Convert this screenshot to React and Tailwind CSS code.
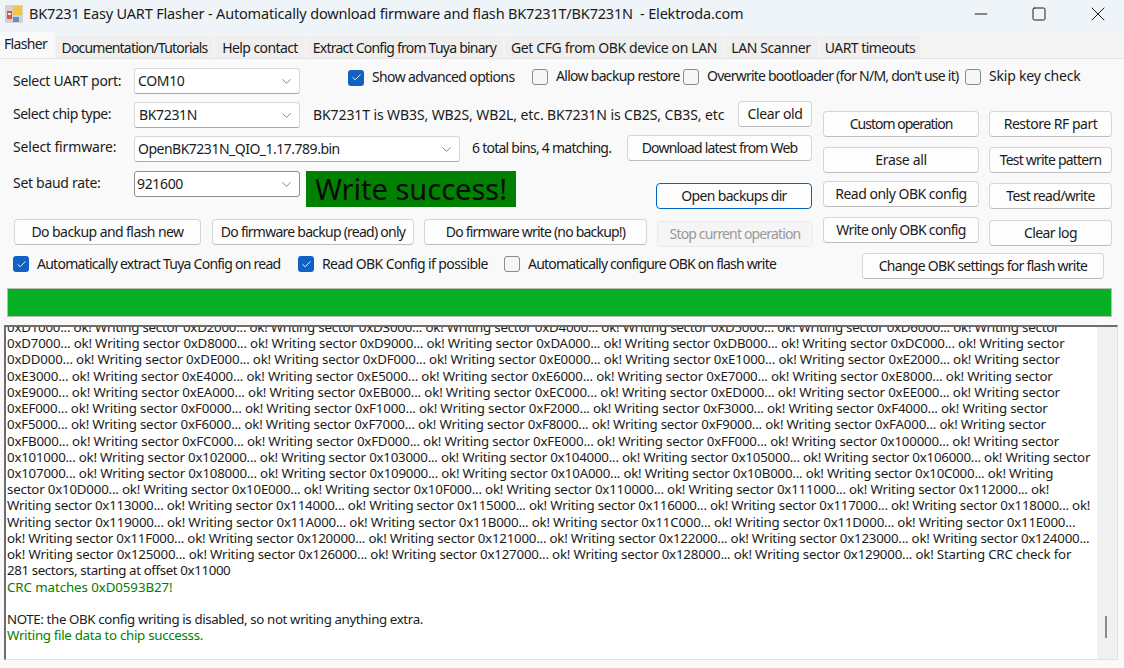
import { Check, ChevronDown, Minus, Square, X } from "lucide-react";

const tabs = [
  ["Documentation/Tutorials", "ml-[1px] w-[157px] tracking-[-0.8px]"],
  ["Help contact", "ml-[2px] w-[90px] tracking-[-0.6px]"],
  ["Extract Config from Tuya binary", "ml-[1px] w-[197px] tracking-[-0.77px]"],
  ["Get CFG from OBK device on LAN", "ml-[2px] w-[218px] tracking-[-0.38px]"],
  ["LAN Scanner", "ml-[1px] w-[94px] tracking-[-0.4px]"],
  ["UART timeouts", "ml-[2px] w-[100px] tracking-[-0.55px]"],
];

// wrapped by hand so the line ends land where the log wraps them
const logLines = [
  ["0xD1000... ok! Writing sector 0xD2000... ok! Writing sector 0xD3000... ok! Writing sector 0xD4000... ok! Writing sector 0xD5000... ok! Writing sector 0xD6000... ok! Writing sector", "tracking-[-0.215px]"],
  ["0xD7000... ok! Writing sector 0xD8000... ok! Writing sector 0xD9000... ok! Writing sector 0xDA000... ok! Writing sector 0xDB000... ok! Writing sector 0xDC000... ok! Writing sector", "tracking-[-0.2px]"],
  ["0xDD000... ok! Writing sector 0xDE000... ok! Writing sector 0xDF000... ok! Writing sector 0xE0000... ok! Writing sector 0xE1000... ok! Writing sector 0xE2000... ok! Writing sector", "tracking-[-0.18px]"],
  ["0xE3000... ok! Writing sector 0xE4000... ok! Writing sector 0xE5000... ok! Writing sector 0xE6000... ok! Writing sector 0xE7000... ok! Writing sector 0xE8000... ok! Writing sector", "tracking-[-0.175px]"],
  ["0xE9000... ok! Writing sector 0xEA000... ok! Writing sector 0xEB000... ok! Writing sector 0xEC000... ok! Writing sector 0xED000... ok! Writing sector 0xEE000... ok! Writing sector", "tracking-[-0.16px]"],
  ["0xEF000... ok! Writing sector 0xF0000... ok! Writing sector 0xF1000... ok! Writing sector 0xF2000... ok! Writing sector 0xF3000... ok! Writing sector 0xF4000... ok! Writing sector", "tracking-[-0.185px]"],
  ["0xF5000... ok! Writing sector 0xF6000... ok! Writing sector 0xF7000... ok! Writing sector 0xF8000... ok! Writing sector 0xF9000... ok! Writing sector 0xFA000... ok! Writing sector", "tracking-[-0.2px]"],
  ["0xFB000... ok! Writing sector 0xFC000... ok! Writing sector 0xFD000... ok! Writing sector 0xFE000... ok! Writing sector 0xFF000... ok! Writing sector 0x100000... ok! Writing sector", "tracking-[-0.185px]"],
  ["0x101000... ok! Writing sector 0x102000... ok! Writing sector 0x103000... ok! Writing sector 0x104000... ok! Writing sector 0x105000... ok! Writing sector 0x106000... ok! Writing sector", "tracking-[-0.22px]"],
  ["0x107000... ok! Writing sector 0x108000... ok! Writing sector 0x109000... ok! Writing sector 0x10A000... ok! Writing sector 0x10B000... ok! Writing sector 0x10C000... ok! Writing", "tracking-[-0.215px]"],
  ["sector 0x10D000... ok! Writing sector 0x10E000... ok! Writing sector 0x10F000... ok! Writing sector 0x110000... ok! Writing sector 0x111000... ok! Writing sector 0x112000... ok!", "tracking-[-0.19px]"],
  ["Writing sector 0x113000... ok! Writing sector 0x114000... ok! Writing sector 0x115000... ok! Writing sector 0x116000... ok! Writing sector 0x117000... ok! Writing sector 0x118000... ok!", "tracking-[-0.22px]"],
  ["Writing sector 0x119000... ok! Writing sector 0x11A000... ok! Writing sector 0x11B000... ok! Writing sector 0x11C000... ok! Writing sector 0x11D000... ok! Writing sector 0x11E000...", "tracking-[-0.21px]"],
  ["ok! Writing sector 0x11F000... ok! Writing sector 0x120000... ok! Writing sector 0x121000... ok! Writing sector 0x122000... ok! Writing sector 0x123000... ok! Writing sector 0x124000...", "tracking-[-0.22px]"],
  ["ok! Writing sector 0x125000... ok! Writing sector 0x126000... ok! Writing sector 0x127000... ok! Writing sector 0x128000... ok! Writing sector 0x129000... ok! Starting CRC check for", "tracking-[-0.2px]"],
];

function Btn({ className = "", tone = "border-[#d6d6d6] border-b-[#bdbdbd] bg-[#fdfdfd] text-[#1b1b1b]", track, children }) {
  return (
    <div
      className={`flex h-[26px] shrink-0 items-center justify-center whitespace-nowrap rounded-[4px] border pb-[2px] text-[14px] ${tone} ${track} ${className}`}
    >
      {children}
    </div>
  );
}

function Combo({ value, className = "", track = "tracking-[-0.35px]", border = "border-[#d8d8d8] border-b-[#a8a8a8]" }) {
  return (
    <div
      className={`flex h-[26px] shrink-0 items-center justify-between rounded-[3px] border bg-white pr-[5px] text-[14px] text-[#1b1b1b] ${border} ${track} ${className}`}
    >
      <span className="mb-[2px]">{value}</span>
      <ChevronDown size={15} strokeWidth={1.2} className="text-[#5f5f5f]" />
    </div>
  );
}

function Option({ checked, label, track, className = "" }) {
  return (
    <div className={`flex items-center whitespace-nowrap text-[14px] text-[#1b1b1b] ${track} ${className}`}>
      {checked ? (
        <span className="mr-[8px] flex h-[16px] w-[16px] shrink-0 items-center justify-center rounded-[3px] bg-[#0f62c4]">
          <Check size={11} strokeWidth={2} className="text-white" />
        </span>
      ) : (
        <span className="mr-[8px] h-[16px] w-[16px] shrink-0 rounded-[3px] border border-[#8a8a8a] bg-[#f6f6f6]" />
      )}
      <span className="mb-[2px]">{label}</span>
    </div>
  );
}

function Label({ track, children }) {
  return <div className={`w-[121px] shrink-0 whitespace-nowrap text-[14px] text-[#1b1b1b] ${track}`}>{children}</div>;
}

export default function App() {
  return (
    <div className="flex h-[668px] w-[1124px] flex-col overflow-hidden bg-[#f9f9f9] font-['Noto_Sans',sans-serif]">
      {/* title bar */}
      <div className="relative flex h-[33px] shrink-0 items-center bg-[#eff4f9] pb-[5px] pl-[5px]">
        <svg width="18" height="18" viewBox="0 0 18 18" className="mr-[6px]">
          <rect x="0" y="0" width="18" height="18" fill="#d2d2d2" />
          <rect x="2" y="6" width="5" height="8" fill="#d9553f" />
          <rect x="3" y="8" width="3" height="2" fill="#f3e3dd" />
          <rect x="8" y="1" width="9" height="9" fill="#f4c542" />
          <rect x="8" y="12" width="6" height="5" fill="#5a8fdc" />
        </svg>
        <span className="whitespace-pre text-[14.5px] tracking-[-0.18px] text-[#1a1a1a]">
          BK7231 Easy UART Flasher - Automatically download firmware and flash BK7231T/BK7231N  - Elektroda.com
        </span>
        <div className="ml-auto flex items-center pr-[14px] text-[#1a1a1a]">
          <Minus size={20} strokeWidth={1.2} className="mr-[40px]" />
          <Square size={16} strokeWidth={1.5} className="mr-[39px]" />
          <X size={24} strokeWidth={1} />
        </div>
      </div>

      {/* tabs */}
      <div className="flex h-[26px] shrink-0 items-end border-b border-[#e4e4e4] bg-[#f4f4f4]">
        <div className="relative z-10 flex h-[26px] w-[55px] items-center bg-[#f9f9f9] pb-[3px] pl-[4px] text-[14px] tracking-[-0.65px] text-[#1b1b1b]">
          Flasher
        </div>
        {tabs.map(([name, cls]) => (
          <div
            key={name}
            className={`flex h-[22px] items-center justify-center whitespace-nowrap bg-[#efefef] text-[14px] text-[#1b1b1b] ${cls}`}
          >
            {name}
          </div>
        ))}
      </div>

      {/* first row */}
      <div className="mt-[9px] flex h-[26px] shrink-0 items-center pl-[13px]">
        <div className="mb-[2px]">
          <Label track="tracking-[-0.3px]">Select UART port:</Label>
        </div>
        <Combo value="COM10" className="w-[166px] pl-[3px]" />
        <Option checked label="Show advanced options" track="tracking-[-0.63px]" className="mb-[7px] ml-[48px] w-[184px]" />
        <Option label="Allow backup restore" track="tracking-[-0.7px]" className="mb-[9px] w-[151px]" />
        <Option label="Overwrite bootloader (for N/M, don't use it)" track="tracking-[-0.77px]" className="mb-[9px] w-[282px]" />
        <Option label="Skip key check" track="tracking-[-0.2px]" className="mb-[9px]" />
      </div>

      <div className="flex shrink-0 pl-[13px]">
        {/* left block */}
        <div className="w-[799px]">
          <div className="mt-[7px] flex h-[27px] items-start">
            <div className="mt-[2px]">
              <Label track="tracking-[-0.48px]">Select chip type:</Label>
            </div>
            <Combo value="BK7231N" className="mt-[1px] w-[166px] pl-[4px]" />
            <span className="ml-[13px] mt-[3px] w-[426px] whitespace-nowrap text-[14px] tracking-[-0.1px] text-[#1b1b1b]">
              BK7231T is WB3S, WB2S, WB2L, etc. BK7231N is CB2S, CB3S, etc
            </span>
            <Btn track="tracking-[-0.35px]" className="w-[74px]">Clear old</Btn>
          </div>
          <div className="mt-[7px] flex h-[27px] items-start">
            <div className="mt-[1px]">
              <Label track="tracking-[-0.15px]">Select firmware:</Label>
            </div>
            <Combo value="OpenBK7231N_QIO_1.17.789.bin" track="tracking-[-0.5px]" className="mt-[1px] w-[326px] pl-[3px]" />
            <span className="ml-[12px] mt-[2px] w-[156px] whitespace-nowrap text-[14px] tracking-[-0.75px] text-[#1b1b1b]">
              6 total bins, 4 matching.
            </span>
            <Btn track="tracking-[-0.8px]" className="w-[185px]">Download latest from Web</Btn>
          </div>
          <div className="mt-[9px] flex items-start">
            <div className="flex h-[26px] items-center">
              <div className="mb-[3px]">
                <Label track="tracking-[-0.3px]">Set baud rate:</Label>
              </div>
              <Combo value="921600" className="w-[166px] pl-[2px]" border="border-[#8f8f8f]" />
            </div>
            <div className="ml-[6px] flex h-[36px] w-[211px] items-center justify-center bg-[#008000] text-[29px] text-[#0a0a0a]">
              Write success!
            </div>
            <Btn
              track="tracking-[-0.66px]"
              tone="border-[#0067c0] bg-[#fdfdfd] text-[#1b1b1b]"
              className="ml-[140px] mt-[12px] w-[156px]"
            >
              Open backups dir
            </Btn>
          </div>
          <div className="flex items-start">
            <Btn track="tracking-[-0.57px]" className="ml-px mt-[10px] w-[187px]">Do backup and flash new</Btn>
            <Btn track="tracking-[-0.75px]" className="ml-[11px] mt-[10px] w-[202px]">Do firmware backup (read) only</Btn>
            <Btn track="tracking-[-0.8px]" className="ml-[10px] mt-[10px] w-[223px]">Do firmware write (no backup!)</Btn>
            <Btn
              track="tracking-[-0.85px]"
              tone="border-[#ebebeb] bg-[#f5f5f5] text-[#9a9a9a]"
              className="ml-[10px] mt-[12px] w-[156px]"
            >
              Stop current operation
            </Btn>
          </div>
        </div>

        {/* right button columns */}
        <div className="ml-[11px] flex w-[156px] flex-col pt-[17px]">
          <Btn track="tracking-[-1px]">Custom operation</Btn>
          <Btn track="tracking-[-0.35px]" className="mt-[10px]">Erase all</Btn>
          <Btn track="tracking-[-0.5px]" className="mt-[8px]">Read only OBK config</Btn>
          <Btn track="tracking-[-0.68px]" className="mt-[10px]">Write only OBK config</Btn>
        </div>
        <div className="ml-[10px] flex w-[123px] flex-col pt-[17px]">
          <Btn track="tracking-[-0.48px]">Restore RF part</Btn>
          <Btn track="tracking-[-0.8px]" className="mt-[10px]">Test write pattern</Btn>
          <Btn track="tracking-[-0.68px]" className="mt-[10px]">Test read/write</Btn>
          <Btn track="tracking-[-0.6px]" className="mt-[11px]">Clear log</Btn>
        </div>
      </div>

      {/* checkbox row */}
      <div className="mt-[6px] flex h-[26px] shrink-0 items-center pl-[13px]">
        <Option checked label="Automatically extract Tuya Config on read" track="tracking-[-0.74px]" className="mb-[4px] w-[285px]" />
        <Option checked label="Read OBK Config if possible" track="tracking-[-0.6px]" className="mb-[4px] w-[206px]" />
        <Option label="Automatically configure OBK on flash write" track="tracking-[-0.8px]" className="mb-[4px] w-[358px]" />
        <Btn track="tracking-[-0.72px]" className="w-[242px]">Change OBK settings for flash write</Btn>
      </div>

      {/* progress bar */}
      <div className="ml-[7px] mt-[9px] h-[29px] w-[1105px] shrink-0 border border-[#bcbcbc] bg-[#06b025]" />

      {/* log */}
      <div className="ml-[4px] mt-[8px] flex h-[335px] w-[1114px] shrink-0 border border-[#e2e2e2] border-l-2 border-t-2 border-l-[#6e6e6e] border-t-[#6e6e6e] bg-white">
        <div className="flex min-w-0 flex-1 flex-col overflow-hidden pl-[1px] text-[13.3px] leading-[16.22px] text-[#1b1b1b]">
          <div className="mt-[-8px] whitespace-pre">
            {logLines.map(([line, track]) => (
              <div key={line} className={track}>{line}</div>
            ))}
            <div className="tracking-[-0.38px]">281 sectors, starting at offset 0x11000</div>
            <div className="tracking-[-0.08px] text-[#008000]">CRC matches 0xD0593B27!</div>
            <div>&nbsp;</div>
            <div className="tracking-[-0.38px]">NOTE: the OBK config writing is disabled, so not writing anything extra.</div>
            <div className="tracking-[-0.3px] text-[#008000]">Writing file data to chip successs.</div>
          </div>
        </div>
        <div className="flex w-[20px] shrink-0 flex-col justify-end bg-[#f0f0f0] pb-[21px] pl-[8px]">
          <div className="h-[22px] w-[2px] bg-[#8a8a8a]" />
        </div>
      </div>
    </div>
  );
}
